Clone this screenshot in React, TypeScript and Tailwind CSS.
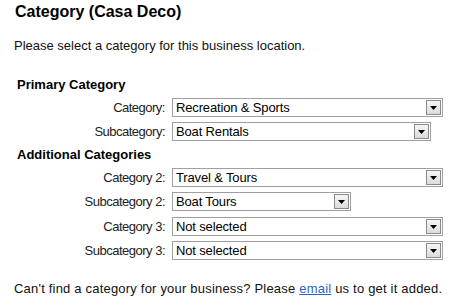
import React from "react";

function Select({ value, width }: { value: string; width: string }) {
  return (
    <div
      className={`${width} h-[19px] border border-[#a0a0a0] bg-white flex items-center justify-between`}
    >
      <span className="pl-[3px] leading-[17px] text-black whitespace-nowrap tracking-[-0.15px]">{value}</span>
      <div className="mr-px w-[15px] h-[15px] border border-[#8a8a8a] bg-gradient-to-b from-[#f6f6f6] to-[#dcdcdc] flex items-center justify-center">
        <svg width="7" height="4" viewBox="0 0 7 4">
          <path d="M0 0h7L3.5 4z" fill="#000" />
        </svg>
      </div>
    </div>
  );
}

function Row({
  label,
  value,
  width,
  mt,
}: {
  label: string;
  value: string;
  width: string;
  mt: string;
}) {
  return (
    <div className={`flex items-center h-[19px] ${mt}`}>
      <div className="w-[166px] text-right pr-[1px] text-[#222] whitespace-nowrap tracking-[-0.5px]">
        {label}
      </div>
      <div className="ml-[6px]">
        <Select value={value} width={width} />
      </div>
    </div>
  );
}

export default function App() {
  return (
    <div className="w-[464px] h-[307px] bg-white font-['Liberation_Sans',Arial,sans-serif] text-[13px] leading-[16px] text-[#111] overflow-hidden">
      <h1 className="pl-[15px] pt-[2px] text-[16px] leading-[20px] font-bold text-black">
        Category (Casa Deco)
      </h1>
      <p className="mt-[16px] pl-[14px]">Please select a category for this business location.</p>
      <div className="mt-[23px] pl-[17px] font-bold text-black">Primary Category</div>
      <div className="flex flex-col">
        <Row label="Category:" value="Recreation & Sports" width="w-[271px]" mt="mt-[5px]" />
        <Row label="Subcategory:" value="Boat Rentals" width="w-[259px]" mt="mt-[5px]" />
      </div>
      <div className="mt-[6px] pl-[17px] font-bold text-black">Additional Categories</div>
      <div className="flex flex-col">
        <Row label="Category 2:" value="Travel & Tours" width="w-[271px]" mt="mt-[5px]" />
        <Row label="Subcategory 2:" value="Boat Tours" width="w-[179px]" mt="mt-[5px]" />
        <Row label="Category 3:" value="Not selected" width="w-[271px]" mt="mt-[6px]" />
        <Row label="Subcategory 3:" value="Not selected" width="w-[271px]" mt="mt-[5px]" />
      </div>
      <p className="mt-[21px] pl-[14px] tracking-[0.2px]">
        Can't find a category for your business? Please{" "}
        <a className="text-[#2a66c4] underline" href="#">
          email
        </a>{" "}
        us to get it added.
      </p>
    </div>
  );
}
